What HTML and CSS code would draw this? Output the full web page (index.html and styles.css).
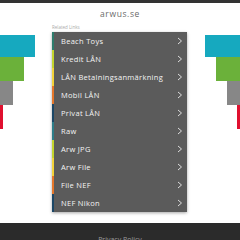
FILE: index.html
```html
<!DOCTYPE html>
<html>
<head>
<meta charset="utf-8">
<link rel="stylesheet" href="styles.css">
</head>
<body>
<div class="topbar"></div>
<header class="title">arwus.se</header>
<main class="main">
  <div class="deco deco-left">
    <div class="bar cyan w35"></div>
    <div class="bar green w24"></div>
    <div class="bar gray w13"></div>
    <div class="bar red w3"></div>
  </div>
  <section class="center">
    <div class="label">Related Links</div>
    <ul class="links">
      <li class="c-teal"><span>Beach Toys</span><svg viewBox="0 0 6 8"><polyline points="1,1 4.5,4 1,7"/></svg></li>
      <li class="c-lime"><span>Kredit LÅN</span><svg viewBox="0 0 6 8"><polyline points="1,1 4.5,4 1,7"/></svg></li>
      <li class="c-yellow"><span>LÅN Betalningsanmärkning</span><svg viewBox="0 0 6 8"><polyline points="1,1 4.5,4 1,7"/></svg></li>
      <li class="c-orange"><span>Mobil LÅN</span><svg viewBox="0 0 6 8"><polyline points="1,1 4.5,4 1,7"/></svg></li>
      <li class="c-navy"><span>Privat LÅN</span><svg viewBox="0 0 6 8"><polyline points="1,1 4.5,4 1,7"/></svg></li>
      <li class="c-teal2"><span>Raw</span><svg viewBox="0 0 6 8"><polyline points="1,1 4.5,4 1,7"/></svg></li>
      <li class="c-lime"><span>Arw JPG</span><svg viewBox="0 0 6 8"><polyline points="1,1 4.5,4 1,7"/></svg></li>
      <li class="c-yellow"><span>Arw File</span><svg viewBox="0 0 6 8"><polyline points="1,1 4.5,4 1,7"/></svg></li>
      <li class="c-orange"><span>File NEF</span><svg viewBox="0 0 6 8"><polyline points="1,1 4.5,4 1,7"/></svg></li>
      <li class="c-navy"><span>NEF Nikon</span><svg viewBox="0 0 6 8"><polyline points="1,1 4.5,4 1,7"/></svg></li>
    </ul>
  </section>
  <div class="deco deco-right">
    <div class="bar cyan w35"></div>
    <div class="bar green w24"></div>
    <div class="bar gray w13"></div>
    <div class="bar red w3"></div>
  </div>
</main>
<footer class="footer"><span>Privacy Policy</span></footer>
</body>
</html>
```
FILE: styles.css
```css
html, body {
  margin: 0;
  padding: 0;
  background: #fff;
  width: 240px;
  height: 240px;
  overflow: hidden;
  font-family: "Open Sans", "Liberation Sans", sans-serif;
}
.topbar {
  height: 3px;
  background: #333;
}
.title {
  height: 20px;
  line-height: 22px;
  text-align: center;
  font-size: 8.5px;
  color: #6a6a6a;
  letter-spacing: 0.6px;
}
.main {
  display: grid;
  grid-template-columns: 52px 135px 1fr;
}
.deco {
  display: flex;
  flex-direction: column;
  padding-top: 12px;
}
.deco-left { align-items: flex-start; }
.deco-right { align-items: flex-end; }
.bar { height: 24px; }
.bar.cyan { height: 22px; }
.cyan { background: #16a9bf; }
.green { background: #6bb13a; }
.gray { background: #878787; }
.red { background: #e0102f; }
.w35 { width: 35px; }
.w24 { width: 24px; }
.w13 { width: 13px; }
.w3 { width: 3px; }
.center {
  display: flex;
  flex-direction: column;
}
.label {
  height: 9px;
  font-size: 4.5px;
  line-height: 8px;
  color: #aaa;
}
.links {
  list-style: none;
  margin: 0;
  padding: 0;
  background: #5b5b5b;
  box-shadow: 0 1px 3px rgba(0,0,0,0.35);
}
.links li {
  height: 18px;
  display: flex;
  align-items: center;
  justify-content: space-between;
  border-left: 2px solid #2e7c6c;
  padding: 0 4px 0 7px;
  color: #f4f4f4;
  font-size: 7.5px;
  font-weight: 500;
  letter-spacing: 0.3px;
}
.links svg {
  width: 6px;
  height: 8px;
  fill: none;
  stroke: #ddd;
  stroke-width: 1;
}
.c-teal { border-left-color: #2e7c6c !important; }
.c-lime { border-left-color: #c3d52e !important; }
.c-yellow { border-left-color: #f2d33a !important; }
.c-orange { border-left-color: #e5772b !important; }
.c-navy { border-left-color: #1c4766 !important; }
.c-teal2 { border-left-color: #2d7d88 !important; }
.footer {
  margin-top: 11px;
  height: 17px;
  background: #2b2b2b;
  text-align: center;
  font-size: 7px;
  line-height: 34px;
  color: #999;
}
```
